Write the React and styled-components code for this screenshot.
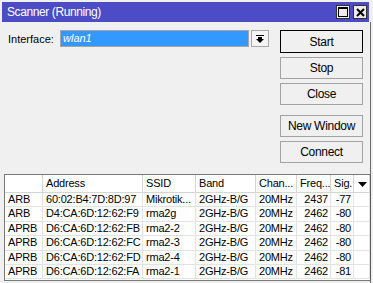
import React from 'react'
import styled, { createGlobalStyle } from 'styled-components'

const GlobalStyle = createGlobalStyle`
  html, body {
    margin: 0;
    padding: 0;
    background: #f0f0f0;
  }
  body {
    font-family: 'Liberation Sans', Arial, sans-serif;
    font-size: 11px;
    color: #000;
  }
`

const Screen = styled.div`
  width: 373px;
  height: 283px;
  padding: 2px 2px 0 2px;
  box-sizing: border-box;
  overflow: hidden;
  background: #f0f0f0;
`

const Window = styled.div`
  width: 369px;
  height: 281px;
  display: flex;
  flex-direction: column;
`

const TitleBar = styled.div`
  flex-shrink: 0;
  height: 20px;
  width: 367px;
  background: #4c4cc6;
  display: flex;
  align-items: center;
  justify-content: space-between;
  padding: 0 2px 0 5px;
  box-sizing: border-box;
`

const TitleText = styled.span`
  color: #fff;
  font-size: 12px;
  letter-spacing: -0.4px;
`

const TitleButtons = styled.div`
  display: flex;
  gap: 3px;
`

const TitleButton = styled.div`
  width: 14px;
  height: 14px;
  box-sizing: border-box;
  border: 1px solid #303030;
  background: #ececec;
  display: flex;
  align-items: center;
  justify-content: center;
`

const Body = styled.div`
  flex: 1;
  display: flex;
  flex-direction: column;
  border-right: 1px solid #6e6e6e;
  min-height: 0;
`

const Top = styled.div`
  flex-shrink: 0;
  display: flex;
  justify-content: space-between;
  padding: 8px 7px 0 6px;
  height: 152px;
  box-sizing: border-box;
`

const FormRow = styled.div`
  display: flex;
  align-items: center;
  height: 17px;
`

const Label = styled.span`
  width: 52px;
`

const Input = styled.div`
  width: 189px;
  height: 17px;
  box-sizing: border-box;
  border: 1px solid #a5a5a5;
  background: #3399ff;
  color: #fff;
  font-style: italic;
  padding: 1px 0 0 2px;
  line-height: 13px;
`

const DropButton = styled.div`
  width: 18px;
  height: 17px;
  margin-left: 2px;
  box-sizing: border-box;
  border: 1px solid #a8a8a8;
  background: #f4f4f4;
  display: flex;
  align-items: center;
  justify-content: center;
`

const ButtonColumn = styled.div`
  display: flex;
  flex-direction: column;
  width: 83px;
`

const Button = styled.div`
  height: ${p => (p.primary ? '23px' : '22px')};
  margin-top: ${p => p.gap || 0}px;
  box-sizing: border-box;
  border: 1px solid ${p => (p.primary ? '#000' : '#a3a3a3')};
  background: #f0f0f0;
  display: flex;
  align-items: center;
  justify-content: center;
  font-size: 12px;
  letter-spacing: -0.3px;
`

const TableWrap = styled.div`
  flex-shrink: 0;
  margin: 0 -1px 0 2px;
  height: 107px;
  box-sizing: border-box;
  border: 1px solid #7a7a7a;
  border-right-color: #5a5a5a;
  background: #fff;
  overflow: hidden;
`

const Grid = styled.div`
  display: grid;
  grid-template-columns: 38px 100px 53px 60px 41px 34px 23px 1fr;
`

const HeadCell = styled.div`
  height: 17px;
  line-height: 17px;
  padding: 0 2px 0 3px;
  border-right: 1px solid #d5d5d5;
  border-bottom: 1px solid #d5d5d5;
  white-space: nowrap;
  overflow: hidden;
  text-align: ${p => (p.center ? 'center' : 'left')};
  letter-spacing: -0.2px;
`

const Cell = styled.div`
  height: 13.4px;
  line-height: 13px;
  padding: 0 ${p => (p.right ? '2px 0 1px' : '1px 0 3px')};
  border-right: 1px solid #e3e3e3;
  border-bottom: 1px solid #e3e3e3;
  text-align: ${p => (p.right ? 'right' : 'left')};
  white-space: nowrap;
  overflow: hidden;
  letter-spacing: -0.2px;
`

const rows = [
  ['ARB', '60:02:B4:7D:8D:97', 'Mikrotik...', '2GHz-B/G', '20MHz', '2437', '-77'],
  ['ARB', 'D4:CA:6D:12:62:F9', 'rma2g', '2GHz-B/G', '20MHz', '2462', '-80'],
  ['APRB', 'D6:CA:6D:12:62:FB', 'rma2-2', '2GHz-B/G', '20MHz', '2462', '-80'],
  ['APRB', 'D6:CA:6D:12:62:FC', 'rma2-3', '2GHz-B/G', '20MHz', '2462', '-80'],
  ['APRB', 'D6:CA:6D:12:62:FD', 'rma2-4', '2GHz-B/G', '20MHz', '2462', '-80'],
  ['APRB', 'D6:CA:6D:12:62:FA', 'rma2-1', '2GHz-B/G', '20MHz', '2462', '-81'],
]

const MaxIcon = () => (
  <svg width="10" height="10" viewBox="0 0 10 10">
    <rect x="0.5" y="0.5" width="9" height="9" fill="none" stroke="#000" />
    <rect x="0" y="0" width="10" height="2" fill="#000" />
  </svg>
)

const CloseIcon = () => (
  <svg width="9" height="9" viewBox="0 0 9 9">
    <path d="M1 1 L8 8 M8 1 L1 8" stroke="#000" strokeWidth="2" />
  </svg>
)

const DropIcon = () => (
  <svg width="8" height="8" viewBox="0 0 8 8">
    <rect x="0" y="0" width="8" height="1" fill="#000" />
    <rect x="2" y="2" width="4" height="2" fill="#000" />
    <path d="M0 4 L8 4 L4 8 Z" fill="#000" />
  </svg>
)

const SortIcon = () => (
  <svg width="9" height="5" viewBox="0 0 9 5">
    <path d="M0 0 L9 0 L4.5 5 Z" fill="#000" />
  </svg>
)

export default function App() {
  return (
    <Screen>
      <GlobalStyle />
      <Window>
        <TitleBar>
          <TitleText>Scanner (Running)</TitleText>
          <TitleButtons>
            <TitleButton><MaxIcon /></TitleButton>
            <TitleButton><CloseIcon /></TitleButton>
          </TitleButtons>
        </TitleBar>
        <Body>
          <Top>
            <FormRow>
              <Label>Interface:</Label>
              <Input>wlan1</Input>
              <DropButton><DropIcon /></DropButton>
            </FormRow>
            <ButtonColumn>
              <Button primary>Start</Button>
              <Button gap={4}>Stop</Button>
              <Button gap={4}>Close</Button>
              <Button gap={10}>New Window</Button>
              <Button gap={4}>Connect</Button>
            </ButtonColumn>
          </Top>
          <TableWrap>
            <Grid>
              <HeadCell />
              <HeadCell>Address</HeadCell>
              <HeadCell>SSID</HeadCell>
              <HeadCell>Band</HeadCell>
              <HeadCell>Chan...</HeadCell>
              <HeadCell>Freq...</HeadCell>
              <HeadCell>Sig.</HeadCell>
              <HeadCell center><SortIcon /></HeadCell>
              {rows.map((r, i) => (
                <React.Fragment key={i}>
                  <Cell>{r[0]}</Cell>
                  <Cell>{r[1]}</Cell>
                  <Cell>{r[2]}</Cell>
                  <Cell>{r[3]}</Cell>
                  <Cell>{r[4]}</Cell>
                  <Cell right>{r[5]}</Cell>
                  <Cell right>{r[6]}</Cell>
                  <Cell />
                </React.Fragment>
              ))}
            </Grid>
          </TableWrap>
        </Body>
      </Window>
    </Screen>
  )
}
